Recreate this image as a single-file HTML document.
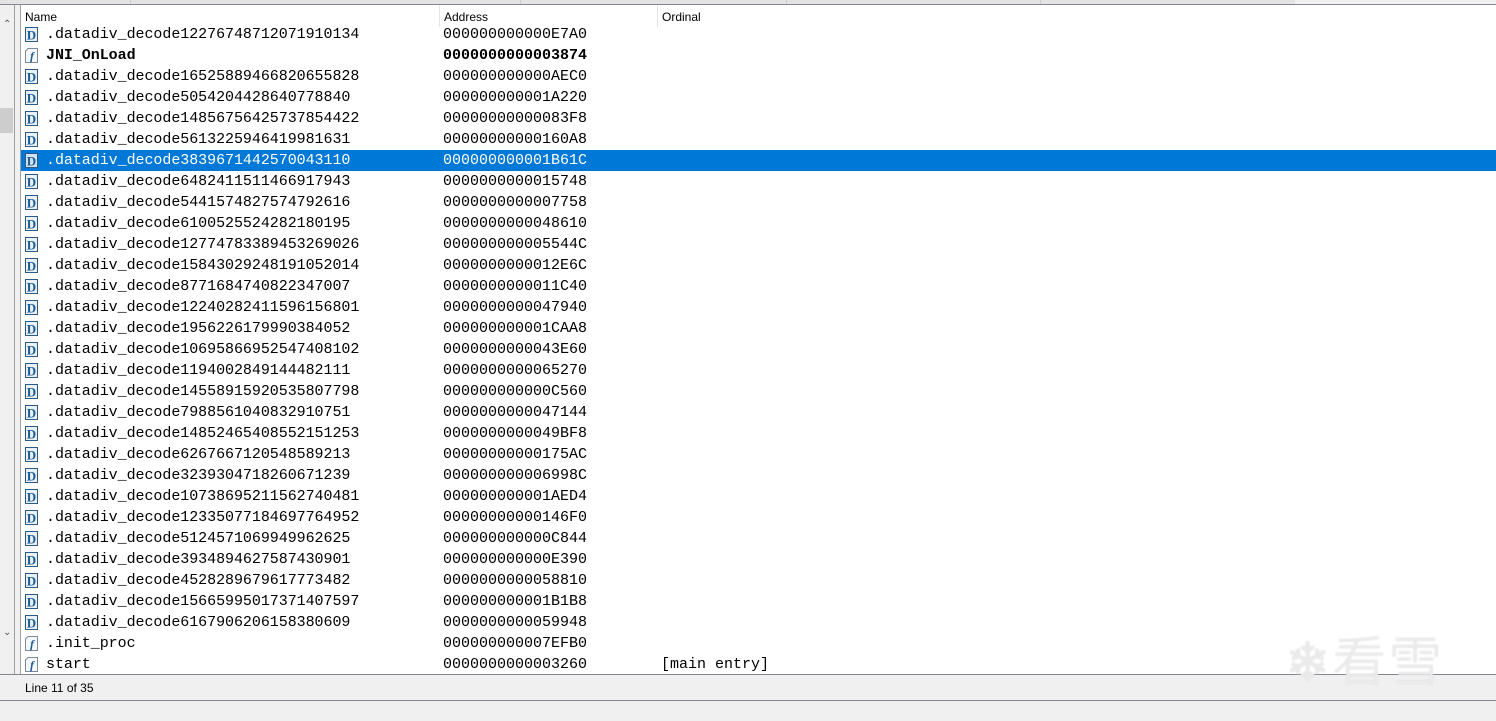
<!DOCTYPE html>
<html><head><meta charset="utf-8"><style>
body{margin:0;width:1496px;height:721px;background:#f0f0f0;position:relative;overflow:hidden;font-family:"Liberation Sans",sans-serif}
.top{position:absolute;left:0;top:0;width:1295px;height:4px;background:#e3e3e3}
.topline{position:absolute;left:0;top:4px;width:1496px;height:1px;background:#828790}
.left{position:absolute;left:0;top:5px;width:14px;height:669px;background:#f0f0f0;border-right:1px solid #a0a0a0}
.thumb{position:absolute;left:0;top:103px;width:13px;height:25px;background:#cdcdcd}
.tbl{position:absolute;left:20px;top:5px;width:1476px;height:669px;background:#fff;border-left:1px solid #a0a0a0;overflow:hidden}
.hdr{position:absolute;top:0;height:22px;font-size:12px;color:#000;line-height:24px;padding-left:4px;box-sizing:border-box;border-right:1px solid #e5e5e5;background:#fff;z-index:2}
.row{position:absolute;left:0;width:1476px;height:21px;font-family:"Liberation Mono",monospace;font-size:15px;line-height:21px;color:#000}
.row.sel{background:#0078d7;color:#fff}
.row span{position:absolute;top:0}
.ic{position:absolute;left:4px;top:3px;width:13px;height:15px}
.n{left:25px;letter-spacing:-0.05px}.a{left:422px}.o{left:640px}
.b{font-weight:bold}
.status{position:absolute;left:0;top:674px;width:1496px;height:27px;border-top:1px solid #828790;border-bottom:1px solid #828790;font-size:12px;line-height:26px;padding-left:25px;box-sizing:border-box}
.wm{position:absolute;left:1285px;top:618px;color:rgba(236,236,236,0.85);font-family:"Noto Sans CJK SC",sans-serif;font-size:54px;font-weight:300;letter-spacing:2px;text-shadow:0 0 2px #ddd;z-index:5}
</style></head><body>
<div class="top"><div style="position:absolute;left:130px;top:0;width:1px;height:4px;background:#ccc"></div><div style="position:absolute;left:520px;top:0;width:1px;height:4px;background:#ccc"></div><div style="position:absolute;left:786px;top:0;width:1px;height:4px;background:#ccc"></div><div style="position:absolute;left:1040px;top:0;width:1px;height:4px;background:#ccc"></div></div>
<div class="topline"></div>
<div class="left"><div style="position:absolute;left:3px;top:14px;font-size:10px;color:#555">&#8963;</div><div class="thumb"></div><div style="position:absolute;left:3px;top:622px;font-size:10px;color:#555">&#8964;</div></div>
<div class="tbl" id="t">
<div class="hdr" style="left:0;width:419px">Name</div>
<div class="hdr" style="left:419px;width:218px">Address</div>
<div class="hdr" style="left:637px;width:839px;border:none">Ordinal</div>
</div>
<div class="status">Line 11 of 35</div>
<div class="wm">❄看雪</div>
<script>
var rows=[["D",".datadiv_decode12276748712071910134","000000000000E7A0"],["f","JNI_OnLoad","0000000000003874",1],
["D",".datadiv_decode16525889466820655828","000000000000AEC0"],["D",".datadiv_decode5054204428640778840","000000000001A220"],
["D",".datadiv_decode14856756425737854422","00000000000083F8"],["D",".datadiv_decode5613225946419981631","00000000000160A8"],
["D",".datadiv_decode3839671442570043110","000000000001B61C",0,1],["D",".datadiv_decode6482411511466917943","0000000000015748"],
["D",".datadiv_decode5441574827574792616","0000000000007758"],["D",".datadiv_decode6100525524282180195","0000000000048610"],
["D",".datadiv_decode12774783389453269026","000000000005544C"],["D",".datadiv_decode15843029248191052014","0000000000012E6C"],
["D",".datadiv_decode8771684740822347007","0000000000011C40"],["D",".datadiv_decode12240282411596156801","0000000000047940"],
["D",".datadiv_decode1956226179990384052","000000000001CAA8"],["D",".datadiv_decode10695866952547408102","0000000000043E60"],
["D",".datadiv_decode1194002849144482111","0000000000065270"],["D",".datadiv_decode14558915920535807798","000000000000C560"],
["D",".datadiv_decode7988561040832910751","0000000000047144"],["D",".datadiv_decode14852465408552151253","0000000000049BF8"],
["D",".datadiv_decode6267667120548589213","00000000000175AC"],["D",".datadiv_decode3239304718260671239","000000000006998C"],
["D",".datadiv_decode10738695211562740481","000000000001AED4"],["D",".datadiv_decode12335077184697764952","00000000000146F0"],
["D",".datadiv_decode5124571069949962625","000000000000C844"],["D",".datadiv_decode3934894627587430901","000000000000E390"],
["D",".datadiv_decode4528289679617773482","0000000000058810"],["D",".datadiv_decode15665995017371407597","000000000001B1B8"],
["D",".datadiv_decode6167906206158380609","0000000000059948"],["f",".init_proc","000000000007EFB0"],
["f","start","0000000000003260",0,0,"[main entry]"]];
var t=document.getElementById('t'),h='';
rows.forEach(function(r,i){
var top=19+21*i;
var ic=r[0]=="D"?'<svg class="ic" viewBox="0 0 13 15"><rect x="0.5" y="0.5" width="12" height="14" fill="'+(r[4]?'#cfe3f5':'#e8f0f8')+'" stroke="#2c5a85"/><text x="6.5" y="12.5" font-family="Liberation Serif" font-weight="bold" font-size="13" text-anchor="middle" fill="#1f5c93">D</text></svg>':'<svg class="ic" viewBox="0 0 13 15"><path d="M3 .5h9.5v14H.5V3z" fill="#f4f8fb" stroke="#7a8a99"/><text x="7" y="12" font-family="Liberation Serif" font-style="italic" font-weight="bold" font-size="12" text-anchor="middle" fill="#1f5c93">f</text></svg>';
h+='<div class="row'+(r[4]?' sel':'')+(r[3]?' b':'')+'" style="top:'+top+'px">'+ic+'<span class="n">'+r[1]+'</span><span class="a">'+r[2]+'</span>'+(r[5]?'<span class="o">'+r[5]+'</span>':'')+'</div>';
});
t.insertAdjacentHTML('beforeend',h);
</script>
</body></html>
